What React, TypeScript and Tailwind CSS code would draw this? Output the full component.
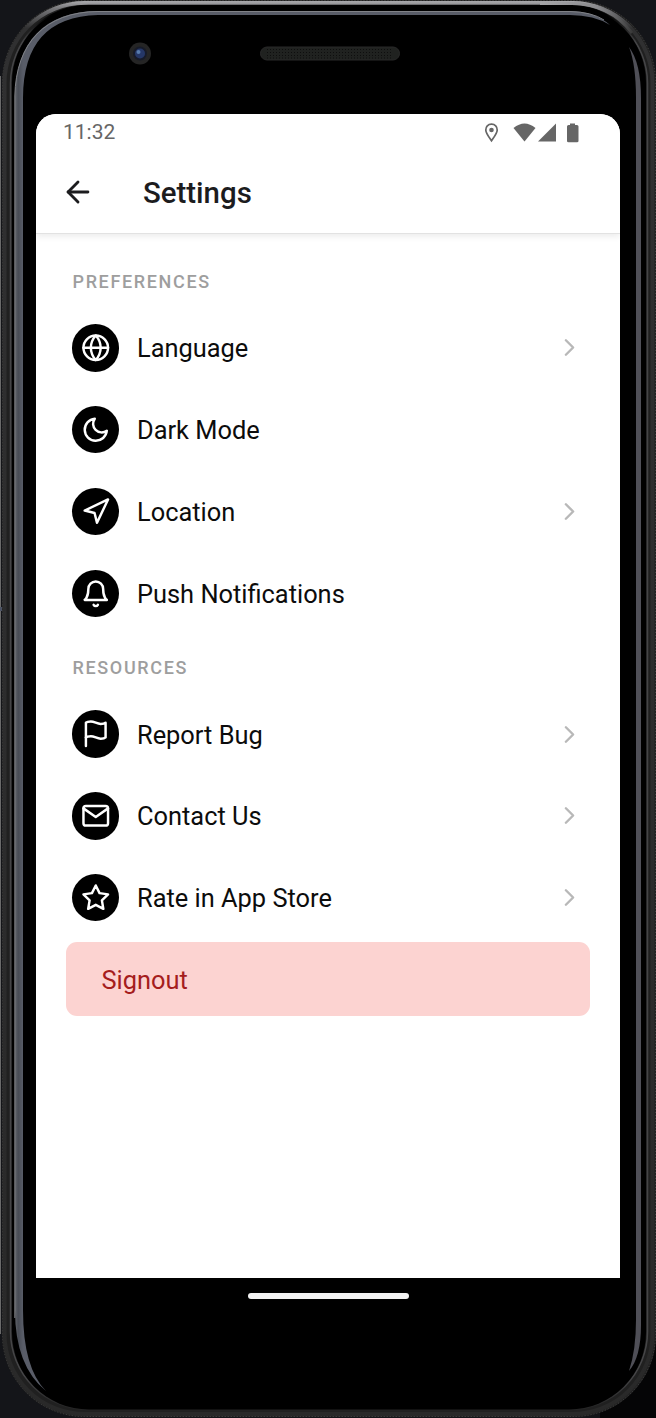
import { FiArrowLeft, FiBell, FiChevronRight, FiFlag, FiGlobe, FiMail, FiMoon, FiNavigation, FiStar } from 'react-icons/fi';
import type { IconType } from 'react-icons';

type Item = { label: string; icon: IconType; link?: boolean };

const preferences: Item[] = [
  { label: 'Language', icon: FiGlobe, link: true },
  { label: 'Dark Mode', icon: FiMoon },
  { label: 'Location', icon: FiNavigation, link: true },
  { label: 'Push Notifications', icon: FiBell },
];

const resources: Item[] = [
  { label: 'Report Bug', icon: FiFlag, link: true },
  { label: 'Contact Us', icon: FiMail, link: true },
  { label: 'Rate in App Store', icon: FiStar, link: true },
];

function Bezel() {
  return (
    <svg className="absolute inset-0" width="656" height="1418" viewBox="0 0 656 1418" fill="none" aria-hidden="true">
      <defs>
        <linearGradient id="edge" x1="0" y1="0" x2="0" y2="1418" gradientUnits="userSpaceOnUse">
          <stop offset="0" stopColor="#b0b0b3" />
          <stop offset="0.006" stopColor="#77777a" />
          <stop offset="0.02" stopColor="#303031" />
          <stop offset="1" stopColor="#292929" />
        </linearGradient>
        <linearGradient id="inner" x1="0" y1="0" x2="0" y2="1418" gradientUnits="userSpaceOnUse">
          <stop offset="0" stopColor="#000" />
          <stop offset="0.01" stopColor="#000" />
          <stop offset="0.03" stopColor="#454547" />
          <stop offset="0.97" stopColor="#454547" />
          <stop offset="1" stopColor="#1c1c1c" />
        </linearGradient>
        <linearGradient id="glint" x1="15" y1="0" x2="23" y2="0" gradientUnits="userSpaceOnUse">
          <stop offset="0" stopColor="#62656b" />
          <stop offset="0.4" stopColor="#484c55" />
          <stop offset="1" stopColor="#595d68" />
        </linearGradient>
        <linearGradient id="shine" x1="540" y1="2" x2="634" y2="40" gradientUnits="userSpaceOnUse">
          <stop offset="0" stopColor="#a5a5a8" />
          <stop offset="0.55" stopColor="#8a8a8d" />
          <stop offset="1" stopColor="#303030" />
        </linearGradient>
      </defs>
      <rect width="656" height="1418" fill="#141519" />
      <rect x="600" y="1300" width="56" height="118" fill="#050506" />
      <path d="M0.5 76V1334" stroke="#6a6a6a" />
      <path d="M0 609H2" stroke="#4b5263" strokeWidth="4" />
      <rect x="2" y="0" width="654" height="1417" rx="82" fill="#202020" />
      <rect x="2.5" y="0.5" width="653" height="1416" rx="82" stroke="#484848" strokeDasharray="1 2" />
      <rect x="4.5" y="3" width="648" height="1411" rx="80" stroke="url(#edge)" strokeWidth="4" />
      <rect x="10.5" y="5.5" width="637" height="1404" rx="78" stroke="url(#inner)" strokeWidth="1.5" />
      <rect x="12" y="5.5" width="634" height="1404" rx="77" fill="#000" />
      <path d="M540 3.5H572Q610 4 632 33" stroke="url(#shine)" strokeWidth="3" />
      <path d="M15 1310V98C15 42 45 11 98 11H570Q594 11 610 25Q594 15 570 15H98Q23 17 23 98V1310Q23 1368 46 1391Q15 1366 15 1310Z" fill="url(#glint)" />
      <path d="M14.8 1318V96C16 43 45 12 98 11.500H570Q592 12 604 20" stroke="#808287" />
      <path d="M629 47Q641 63 641 98V1325Q641 1357 629 1371Q636 1350 636 1320V98Q636 65 629 47Z" fill="#4f4f57" />
      <circle cx="140" cy="53.5" r="11" fill="#252525" />
      <circle cx="140" cy="53.5" r="7" fill="#171b29" />
      <circle cx="140" cy="53.5" r="5" fill="#253767" />
      <circle cx="138.5" cy="52" r="2" fill="#587bad" />
      <rect x="260.5" y="47" width="139" height="13" rx="6.5" fill="#202220" stroke="#292929" />
      <path d="M267 49.5H393M267 52.5H393M267 55.5H393M267 58H393" stroke="#0e0e0e" strokeDasharray="1 2" />
    </svg>
  );
}

function StatusBar() {
  return (
    <div className="relative z-10 flex h-9 items-center justify-between bg-white pl-[27px] pr-[41px] pt-px text-[#666]">
      <span className="text-[21px] leading-none">11:32</span>
      <svg width="96" height="20" viewBox="0 0 96 20" aria-label="Location, Wi-Fi, signal and battery">
        <path d="M8.5 1.2C4.900 1.200 2.800 3.800 2.800 7C2.800 10.300 6.300 14.500 8.500 17.800C10.700 14.500 14.200 10.300 14.200 7C14.200 3.800 12.100 1.200 8.500 1.200Z" fill="none" stroke="currentColor" strokeWidth="1.700" />
        <circle cx="8.5" cy="7" r="2.300" fill="currentColor" />
        <path d="M30.5 5Q41.500-4 52.500 5L41.500 18.500Z" fill="currentColor" />
        <path d="M55 18.500L73 0.500V18.500Z" fill="currentColor" />
        <path d="M87 0.500H92V2H94Q95.500 2 95.500 3.500V18Q95.500 19.300 94 19.300H85.500Q84 19.300 84 18V3.500Q84 2 85.500 2H87Z" fill="currentColor" />
      </svg>
    </div>
  );
}

function Row({ label, icon: Icon, link }: Item) {
  return (
    <div className="flex h-[81.8px] items-center pr-9">
      <span className="mr-[18px] flex size-[47.5px] items-center justify-center rounded-full bg-black text-white">
        <Icon size={29.5} strokeWidth={2} />
      </span>
      <span className="flex-1 pt-px text-[25.4px] leading-8 text-[#0c0c0c]">{label}</span>
      {link && <FiChevronRight size={29} className="text-[#b8b8b8]" />}
    </div>
  );
}

function Section({ title, items }: { title: string; items: Item[] }) {
  return (
    <section className="pl-[35.5px]">
      <h2 className="h-6 pl-px text-[18px] font-medium leading-6 tracking-[1.65px] text-[#9e9e9e]">{title}</h2>
      <div className="pt-[13px]">
        {items.map((item) => (
          <Row key={item.label} {...item} />
        ))}
      </div>
    </section>
  );
}

export default function App() {
  return (
    <div className="relative h-[1418px] w-[656px] overflow-hidden bg-[#141519] font-[Roboto,sans-serif]">
      <Bezel />
      <div className="relative px-9 pt-[114px]">
        <main className="h-[1164px] overflow-hidden rounded-t-[20px] bg-white">
          <StatusBar />
          <header className="flex h-[84px] items-center border-b border-[#e2e2e2] pl-[25px] shadow-[0_3px_6px_rgba(0,0,0,0.07)]">
            <FiArrowLeft size={34} className="text-[#1c1c1e]" />
            <h1 className="ml-12 pt-[3px] text-[29.4px] font-medium leading-9 text-[#1c1c1e]">Settings</h1>
          </header>
          <div className="pt-[36px]">
            <Section title="PREFERENCES" items={preferences} />
            <div className="pt-[22px]">
              <Section title="RESOURCES" items={resources} />
            </div>
            <button className="mx-[30px] mt-[3px] flex h-[74px] w-[524px] items-center rounded-[11px] bg-[#fcd3d1] pl-[35.5px] pt-[3px] text-[25.4px] text-[#a51d1d]">Signout</button>
          </div>
        </main>
        <div className="ml-[211.5px] mt-[15px] h-[6px] w-[161px] rounded-full bg-[#f3f3f3]" />
      </div>
    </div>
  );
}
